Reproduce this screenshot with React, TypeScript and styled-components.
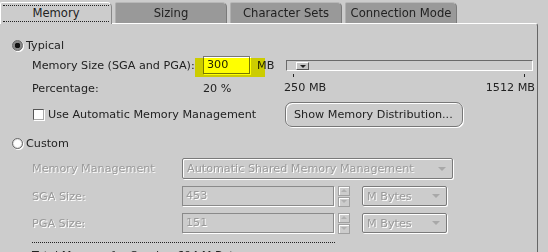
import React from 'react';
import styled, { createGlobalStyle } from 'styled-components';

const GlobalStyle = createGlobalStyle`
  html, body {
    margin: 0;
    padding: 0;
    background: #cccccc;
  }
  body {
    width: 548px;
    height: 252px;
    overflow: hidden;
    font-family: "DejaVu Sans", sans-serif;
    font-size: 11.2px;
    color: #222;
    white-space: nowrap;
  }
`;

const Window = styled.div`
  width: 548px;
  height: 252px;
  display: flex;
  flex-direction: column;
`;

const TabBar = styled.div`
  display: flex;
  gap: 3px;
  padding-top: 2px;
  height: 21px;
`;

const Tab = styled.div<{ active?: boolean }>`
  position: relative;
  z-index: ${(p) => (p.active ? 1 : 0)};
  box-sizing: border-box;
  width: 112px;
  height: ${(p) => (p.active ? '22px' : '21px')};
  background: ${(p) => (p.active ? '#cccccc' : '#999999')};
  border-top: 1px solid ${(p) => (p.active ? '#ffffff' : '#b8b8b8')};
  border-left: 1px solid ${(p) => (p.active ? '#ffffff' : '#b0b0b0')};
  border-right: 1px solid ${(p) => (p.active ? '#888' : '#7a7a7a')};
  border-top-right-radius: 5px;
  border-top-left-radius: 2px;
  padding: 2px 2px 0;
  text-align: center;
  font-size: 11.6px;
`;

const TabLabel = styled.div<{ focused?: boolean }>`
  box-sizing: border-box;
  height: 17px;
  line-height: 15px;
  border-top: 1px dotted ${(p) => (p.focused ? '#222' : 'transparent')};
  border-bottom: 1px dotted ${(p) => (p.focused ? '#222' : 'transparent')};
`;

const Panel = styled.div`
  flex: 1;
  box-sizing: border-box;
  width: 538px;
  border-top: 1px solid #ffffff;
  border-right: 1px solid #666;
  border-top-right-radius: 3px;
  padding-top: 13px;
`;

const RadioRow = styled.label<{ gap?: number }>`
  display: flex;
  align-items: center;
  height: 16px;
  padding-left: 12px;
  margin-top: ${(p) => p.gap ?? 0}px;
  gap: 3px;
`;

const Radio = styled.span<{ checked?: boolean }>`
  box-sizing: border-box;
  width: 11px;
  height: 11px;
  border-radius: 50%;
  border: 1px solid #6a6a6a;
  background: ${(p) =>
    p.checked
      ? 'radial-gradient(circle, #111 0 2.6px, #888 3px 100%)'
      : 'radial-gradient(circle, #fff 0 3px, #e6e6e6 4px 100%)'};
  box-shadow: 1px 1px 0 #fff;
`;

const TypicalGrid = styled.div`
  display: grid;
  grid-template-columns: 171px 81px 251px;
  grid-template-rows: 18px 28px 25px;
  padding-left: 32px;
  margin-top: 3px;
`;

const Cell = styled.div`
  display: flex;
  align-items: center;
`;

const Highlight = styled.div`
  position: relative;
  display: flex;
  align-items: center;
  &::after {
    content: '';
    position: absolute;
    left: -8px;
    top: 2px;
    width: 70px;
    height: 19px;
    background: #ffff00;
    mix-blend-mode: multiply;
    pointer-events: none;
  }
`;

const TextField = styled.div<{ width: number; disabled?: boolean }>`
  box-sizing: border-box;
  width: ${(p) => p.width}px;
  height: ${(p) => (p.disabled ? 20 : 18)}px;
  line-height: ${(p) => (p.disabled ? 18 : 16)}px;
  padding-left: 3px;
  border: 1px solid ${(p) => (p.disabled ? '#8a8a8a' : '#777')};
  background: ${(p) => (p.disabled ? '#cccccc' : '#ffffff')};
  box-shadow: 1px 1px 0 #fff;
  color: ${(p) => (p.disabled ? '#9a9a9a' : '#222')};
  text-shadow: ${(p) => (p.disabled ? '1px 1px 0 #fff' : 'none')};
`;

const Unit = styled.span`
  margin-left: 7px;
`;

const SliderBox = styled.div`
  grid-column: 3;
  grid-row: 1 / span 2;
  display: flex;
  flex-direction: column;
`;

const Track = styled.div`
  position: relative;
  box-sizing: border-box;
  margin: 4px 2px 0;
  height: 11px;
  border-top: 1px solid #6a6a6a;
  border-left: 1px solid #6a6a6a;
  border-bottom: 1px solid #fff;
  border-right: 1px solid #fff;
`;

const Thumb = styled.div`
  position: absolute;
  left: 9px;
  top: 1px;
  box-sizing: border-box;
  width: 13px;
  height: 8px;
  border-top: 1px solid #fff;
  border-left: 1px solid #fff;
  border-right: 1px solid #555;
  border-bottom: 1px solid #555;
  background: #c4c4c4;
  display: flex;
  align-items: center;
  justify-content: center;
  &::after {
    content: '';
    border-left: 3px solid transparent;
    border-right: 3px solid transparent;
    border-top: 3px solid #222;
  }
`;

const Ticks = styled.div`
  display: flex;
  justify-content: space-between;
  padding: 0 10px 0 9px;
  margin-top: 3px;
  height: 3px;
`;

const Tick = styled.span`
  width: 1px;
  height: 3px;
  background: #222;
`;

const SliderLabels = styled.div`
  display: flex;
  justify-content: space-between;
  margin-top: 4px;
  line-height: 14px;
`;

const CheckRow = styled.label`
  grid-column: 1 / span 2;
  display: flex;
  align-items: center;
  gap: 4px;
  padding-left: 1px;
`;

const Checkbox = styled.span`
  box-sizing: border-box;
  width: 11px;
  height: 11px;
  border-top: 1px solid #555;
  border-left: 1px solid #555;
  border-right: 1px solid #aaa;
  border-bottom: 1px solid #aaa;
  background: #fff;
  box-shadow: 1px 1px 0 #fff;
`;

const Button = styled.button`
  grid-column: 3;
  align-self: start;
  box-sizing: border-box;
  margin-left: 1px;
  width: 178px;
  height: 25px;
  border: 1px solid #777;
  border-radius: 7px;
  background: #cccccc;
  box-shadow: inset 1px 1px 0 #fff, 1px 1px 0 #fff;
  font-family: inherit;
  font-size: 11.2px;
  color: #222;
  text-align: left;
  padding: 0 0 0 8px;
  white-space: nowrap;
`;

const CustomGrid = styled.div`
  display: grid;
  grid-template-columns: 150px 1fr;
  grid-template-rows: 21px 20px 20px;
  row-gap: 7px;
  padding-left: 32px;
  margin-top: 7px;
`;

const DisabledLabel = styled.div`
  display: flex;
  align-items: center;
  color: #9a9a9a;
  text-shadow: 1px 1px 0 #fff;
`;

const FieldRow = styled.div`
  display: flex;
  align-items: center;
`;

const Combo = styled.div<{ width: number; height?: number; gapLeft?: number }>`
  box-sizing: border-box;
  display: flex;
  align-items: center;
  justify-content: space-between;
  width: ${(p) => p.width}px;
  height: ${(p) => p.height ?? 20}px;
  margin-left: ${(p) => p.gapLeft ?? 0}px;
  padding: 0 6px 0 4px;
  border: 1px solid #7a7a7a;
  border-radius: 2px;
  box-shadow: inset 1px 1px 0 #fff, 1px 1px 0 #fff;
  color: #9a9a9a;
  text-shadow: 1px 1px 0 #fff;
  &::after {
    content: '';
    border-left: 4px solid transparent;
    border-right: 4px solid transparent;
    border-top: 4px solid #a8a8a8;
  }
`;

const Spinner = styled.div`
  display: flex;
  flex-direction: column;
  margin-left: 4px;
  gap: 1px;
`;

const SpinButton = styled.span<{ down?: boolean }>`
  box-sizing: border-box;
  width: 12px;
  height: 10px;
  border: 1px solid #a0a0a0;
  box-shadow: inset 1px 1px 0 #fff;
  display: flex;
  align-items: center;
  justify-content: center;
  &::after {
    content: '';
    border-left: 3px solid transparent;
    border-right: 3px solid transparent;
    ${(p) => (p.down ? 'border-top' : 'border-bottom')}: 3px solid #b0b0b0;
  }
`;

const DottedRule = styled.div`
  margin: 9px 0 0 32px;
  width: 303px;
  border-top: 1px dotted #222;
`;

const TotalLine = styled.div`
  padding-left: 32px;
  margin-top: 6px;
  line-height: 14px;
`;

const sizes = [
  { label: 'SGA Size:', value: '453' },
  { label: 'PGA Size:', value: '151' },
];

export default function App() {
  return (
    <Window>
      <GlobalStyle />
      <TabBar>
        <Tab active>
          <TabLabel focused>Memory</TabLabel>
        </Tab>
        <Tab>
          <TabLabel>Sizing</TabLabel>
        </Tab>
        <Tab>
          <TabLabel>Character Sets</TabLabel>
        </Tab>
        <Tab>
          <TabLabel>Connection Mode</TabLabel>
        </Tab>
      </TabBar>
      <Panel>
        <RadioRow>
          <Radio checked />
          Typical
        </RadioRow>
        <TypicalGrid>
          <Cell>Memory Size (SGA and PGA):</Cell>
          <Cell>
            <Highlight>
              <TextField width={47}>300</TextField>
              <Unit>MB</Unit>
            </Highlight>
          </Cell>
          <SliderBox>
            <Track>
              <Thumb />
            </Track>
            <Ticks>
              <Tick />
              <Tick />
            </Ticks>
            <SliderLabels>
              <span>250 MB</span>
              <span>1512 MB</span>
            </SliderLabels>
          </SliderBox>
          <Cell>Percentage:</Cell>
          <Cell>20 %</Cell>
          <CheckRow>
            <Checkbox />
            Use Automatic Memory Management
          </CheckRow>
          <Button>Show Memory Distribution...</Button>
        </TypicalGrid>
        <RadioRow gap={8}>
          <Radio />
          Custom
        </RadioRow>
        <CustomGrid>
          <DisabledLabel>Memory Management</DisabledLabel>
          <FieldRow>
            <Combo width={271} height={21}>
              Automatic Shared Memory Management
            </Combo>
          </FieldRow>
          {sizes.map((s) => (
            <React.Fragment key={s.label}>
              <DisabledLabel>{s.label}</DisabledLabel>
              <FieldRow>
                <TextField width={152} disabled>
                  {s.value}
                </TextField>
                <Spinner>
                  <SpinButton />
                  <SpinButton down />
                </Spinner>
                <Combo width={85} gapLeft={12}>
                  M Bytes
                </Combo>
              </FieldRow>
            </React.Fragment>
          ))}
        </CustomGrid>
        <DottedRule />
        <TotalLine>Total Memory for Oracle:&nbsp;&nbsp;604 M Bytes</TotalLine>
      </Panel>
    </Window>
  );
}
